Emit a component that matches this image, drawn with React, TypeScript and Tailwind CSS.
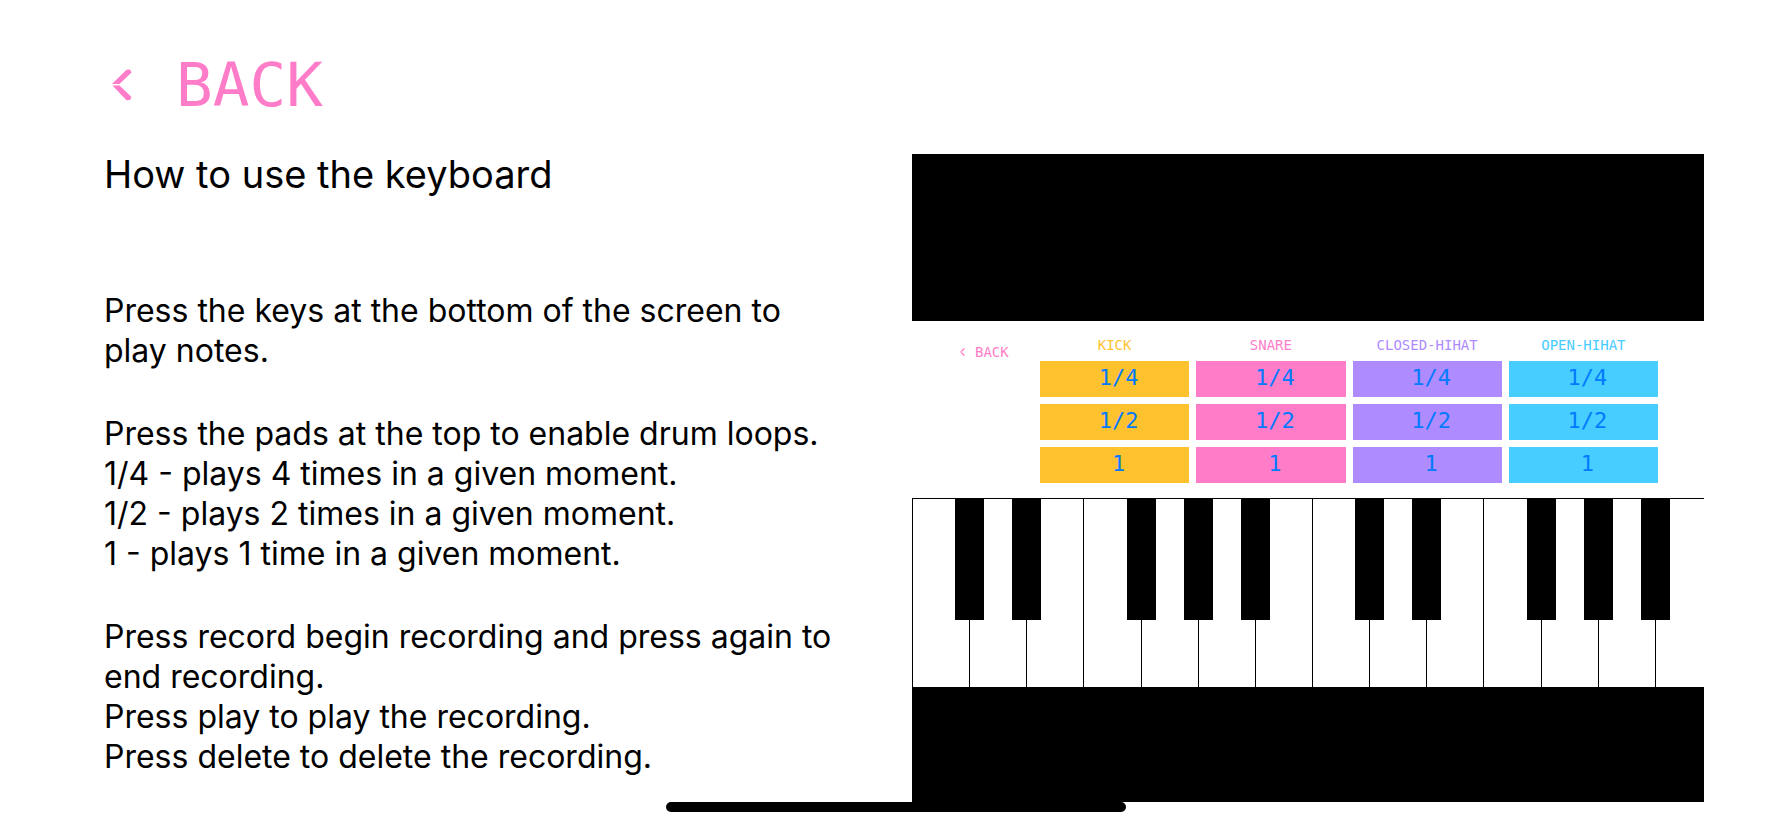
const DISPLAY = "font-['DejaVu_Sans_Mono',monospace]";

function BackArrow({ className }: { className: string }) {
  return (
    <svg viewBox="0 0 20 32" className={className} fill="currentColor" aria-hidden="true">
      <path d="M0 15 14.5 0.8 18 0.5 19.5 3.5 7.5 15Z" />
      <path d="M0.5 16.6H7.5L19.5 28 18 31 14.5 31.2Z" />
    </svg>
  );
}

const columns = [
  { name: "KICK", text: "text-[#ffc22f]", pad: "bg-[#ffc22f]" },
  { name: "SNARE", text: "text-[#ff7dc8]", pad: "bg-[#ff7dc8]" },
  { name: "CLOSED-HIHAT", text: "text-[#ae8cff]", pad: "bg-[#ae8cff]" },
  { name: "OPEN-HIHAT", text: "text-[#47cdff]", pad: "bg-[#47cdff]" },
];

const loops = ["1/4", "1/2", "1"];

const whiteKeys = Array.from({ length: 14 }, (_, i) => i);
const keysWithSharp = new Set([0, 1, 3, 4, 5, 7, 8, 10, 11, 12]);

function DrumPads() {
  return (
    <div className="flex bg-white pt-3 pr-[46px] pb-[15px]">
      <div className="w-32 shrink-0 pt-[11px] pl-12">
        <button type="button" className={`flex items-center gap-[10px] text-[#ff7dc8] ${DISPLAY} text-[14px] leading-[16px]`}>
          <BackArrow className="h-2 w-[5px]" />
          BACK
        </button>
      </div>
      <div className="grid grow grid-cols-4 gap-[7px]">
        {columns.map((column) => (
          <div key={column.name} className="flex flex-col gap-[7px]">
            <h2 className={`h-[21px] text-center ${DISPLAY} text-[14px] leading-[25px] ${column.text}`}>{column.name}</h2>
            {loops.map((loop) => (
              <button
                key={loop}
                type="button"
                aria-label={`${column.name} ${loop}`}
                className={`h-9 pb-[2px] pl-2 text-center ${DISPLAY} text-[22px] leading-[32px] text-[#007aff] ${column.pad}`}
              >
                {loop}
              </button>
            ))}
          </div>
        ))}
      </div>
    </div>
  );
}

function Piano() {
  return (
    <div className="overflow-hidden border-t border-black bg-white">
      <div className="flex h-[188px] w-[101%]">
        {whiteKeys.map((key) => (
          <div key={key} className="relative flex-1 border-l border-black">
            {keysWithSharp.has(key) && (
              <div className="absolute top-0 -right-[15px] z-10 h-[121px] w-[29px] bg-black" />
            )}
          </div>
        ))}
      </div>
    </div>
  );
}

export default function App() {
  return (
    <main className="flex min-h-screen flex-col bg-white pr-[88px] pl-[104px] font-['Inter',sans-serif] text-black">
      <header className="flex h-[154px] items-center pt-4 pl-2">
        <button type="button" className={`flex items-center gap-11 text-[#ff7dc8] ${DISPLAY} text-[61px] leading-[72px]`}>
          <BackArrow className="h-8 w-5" />
          BACK
        </button>
      </header>

      <div className="grid grid-cols-2 gap-4">
        <section className="pr-12">
          <h1 className="text-[38px] leading-[41px]">How to use the keyboard</h1>
          <div className="mt-24 flex flex-col gap-[43px] text-[32px] leading-[40px]">
            <p>Press the keys at the bottom of the screen to play notes.</p>
            <p>
              Press the pads at the top to enable drum loops.
              <br />
              1/4 - plays 4 times in a given moment.
              <br />
              1/2 - plays 2 times in a given moment.
              <br />1 - plays 1 time in a given moment.
            </p>
            <p>
              Press record begin recording and press again to end recording.
              <br />
              Press play to play the recording.
              <br />
              Press delete to delete the recording.
            </p>
          </div>
        </section>

        <section aria-label="Keyboard preview" className="bg-black pt-[167px] pb-[115px]">
          <DrumPads />
          <Piano />
        </section>
      </div>

      <div className="mr-4 flex justify-center self-stretch">
        <div className="h-[10px] w-[460px] rounded-full bg-black" />
      </div>
    </main>
  );
}
